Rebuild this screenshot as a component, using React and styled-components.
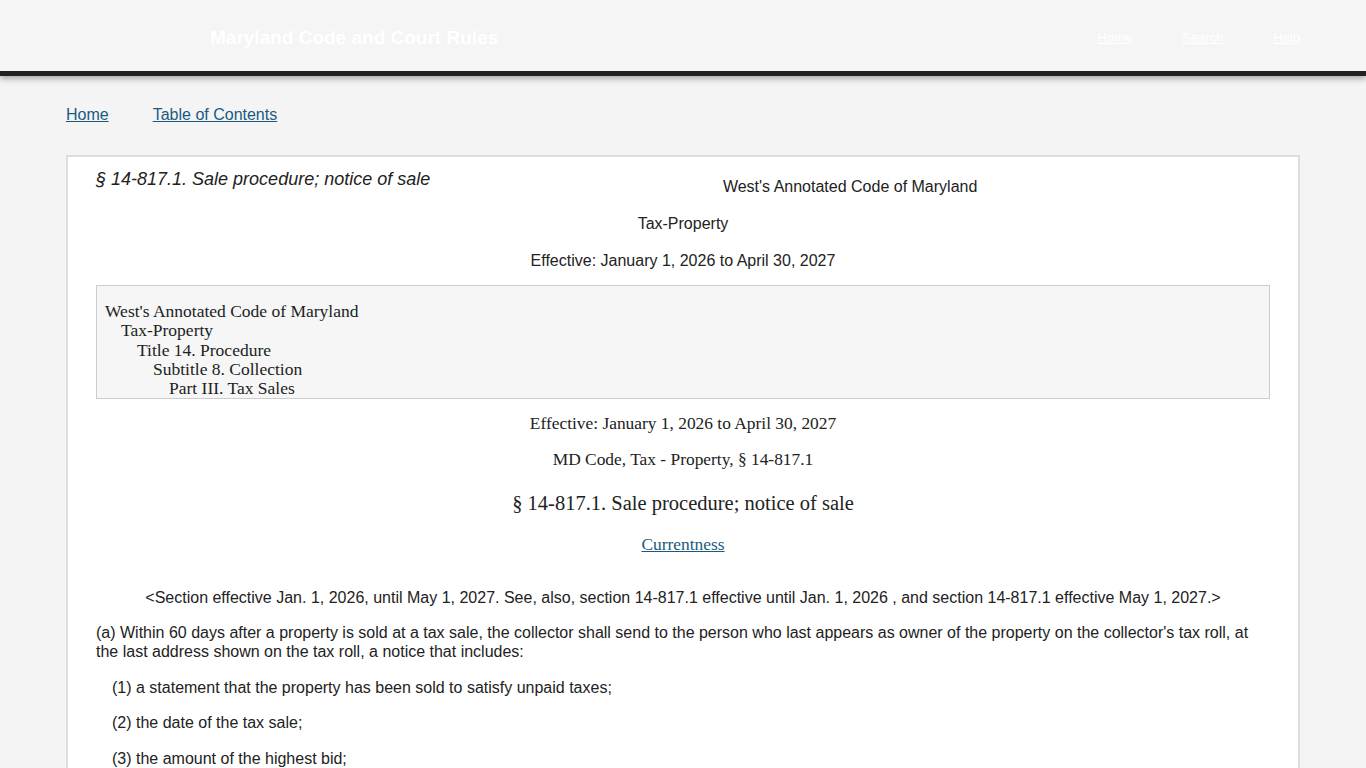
import React from 'react';
import styled, { createGlobalStyle } from 'styled-components';

const Global = createGlobalStyle`
  html, body {
    margin: 0;
    padding: 0;
    background: #f4f4f4;
  }
  body {
    font-family: "Liberation Sans", Arial, sans-serif;
    color: #222;
  }
`

const Header = styled.header`
  height: 76px;
  box-sizing: border-box;
  background: #f5f5f5;
  border-bottom: 5px solid #222;
  box-shadow: 0 3px 6px rgba(0, 0, 0, 0.3);
  display: flex;
  align-items: center;
  padding: 4px 66px 0 210px;
`

const Brand = styled.div`
  flex: 1;
  color: #fff;
  font-weight: bold;
  font-size: 19px;
  font-family: "Liberation Sans", Arial, sans-serif;
`

const TopNav = styled.nav`
  display: flex;
  gap: 50px;
`

const TopLink = styled.a`
  color: #fff;
  font-family: "Liberation Sans", Arial, sans-serif;
  font-size: 13px;
  text-decoration: underline;
`

const Crumbs = styled.div`
  display: flex;
  gap: 44px;
  padding: 30px 66px 31px;
  font-size: 16px;
`

const Link = styled.a`
  color: #1a5a80;
  text-decoration: underline;
  cursor: pointer;
`

const Card = styled.main`
  margin: 0 66px;
  background: #fff;
  border: 2px solid #ddd;
  border-bottom: none;
  padding: 12px 28px 20px;
  min-height: 640px;
`

const DocTitle = styled.h1`
  float: left;
  margin: 0;
  font-size: 18px;
  font-weight: normal;
  font-style: italic;
  line-height: 20px;
`

const Center = styled.p`
  text-align: center;
  margin: ${p => p.$m || '0 0 18px'};
  font-size: ${p => p.$serif ? '17.4px' : '16px'};
  line-height: 19px;
  font-family: ${p => p.$serif ? '"Liberation Serif", Georgia, serif' : '"Liberation Sans", Arial, sans-serif'};
  ${p => p.$big && 'font-size: 20.5px; line-height: 24px;'}
`

const Prelim = styled.div`
  clear: both;
  background: #f6f6f6;
  border: 1px solid #ccc;
  padding: 16px 8px 0;
  height: 96px;
  overflow: hidden;
  font-family: "Liberation Serif", Georgia, serif;
  font-size: 17.5px;
  line-height: 19.3px;
  margin-bottom: 15px;
`

const Level = styled.div`
  padding-left: ${p => p.$lvl * 16}px;
`

const Para = styled.p`
  margin: 0 0 16.5px;
  padding-left: ${p => p.$indent ? 16 : 0}px;
  font-size: 16px;
  line-height: 19px;
`

const levels = [
  "West's Annotated Code of Maryland",
  'Tax-Property',
  'Title 14. Procedure',
  'Subtitle 8. Collection',
  'Part III. Tax Sales',
];

const items = [
  '(1) a statement that the property has been sold to satisfy unpaid taxes;',
  '(2) the date of the tax sale;',
  '(3) the amount of the highest bid;',
  '(4) the name and address of the holder of the certificate of sale;',
];

const App = () => {
  return (
    <>
      <Global />
      <Header>
        <Brand>Maryland Code and Court Rules</Brand>
        <TopNav>
          <TopLink>Home</TopLink>
          <TopLink>Search</TopLink>
          <TopLink>Help</TopLink>
        </TopNav>
      </Header>
      <Crumbs>
        <Link>Home</Link>
        <Link>Table of Contents</Link>
      </Crumbs>
      <Card>
        <DocTitle>§ 14-817.1. Sale procedure; notice of sale</DocTitle>
        <Center $m="8px 0 18px">West's Annotated Code of Maryland</Center>
        <Center>Tax-Property</Center>
        <Center $m="0 0 15px">Effective: January 1, 2026 to April 30, 2027</Center>
        <Prelim>
          {levels.map((l, i) => <Level key={i} $lvl={i}>{l}</Level>)}
        </Prelim>
        <Center $serif $m="0 0 17px">Effective: January 1, 2026 to April 30, 2027</Center>
        <Center $serif $m="0 0 22px">MD Code, Tax - Property, § 14-817.1</Center>
        <Center $serif $big $m="0 0 20px">§ 14-817.1. Sale procedure; notice of sale</Center>
        <Center $serif $m="0 0 34px"><Link>Currentness</Link></Center>
        <Center $m="0 0 16px">&lt;Section effective Jan. 1, 2026, until May 1, 2027. See, also, section 14-817.1 effective until Jan. 1, 2026 , and section 14-817.1 effective May 1, 2027.&gt;</Center>
        <Para>(a) Within 60 days after a property is sold at a tax sale, the collector shall send to the person who last appears as owner of the property on the collector's tax roll, at the last address shown on the tax roll, a notice that includes:</Para>
        {items.map((t, i) => <Para key={i} $indent>{t}</Para>)}
      </Card>
    </>
  );
};

export default App;
